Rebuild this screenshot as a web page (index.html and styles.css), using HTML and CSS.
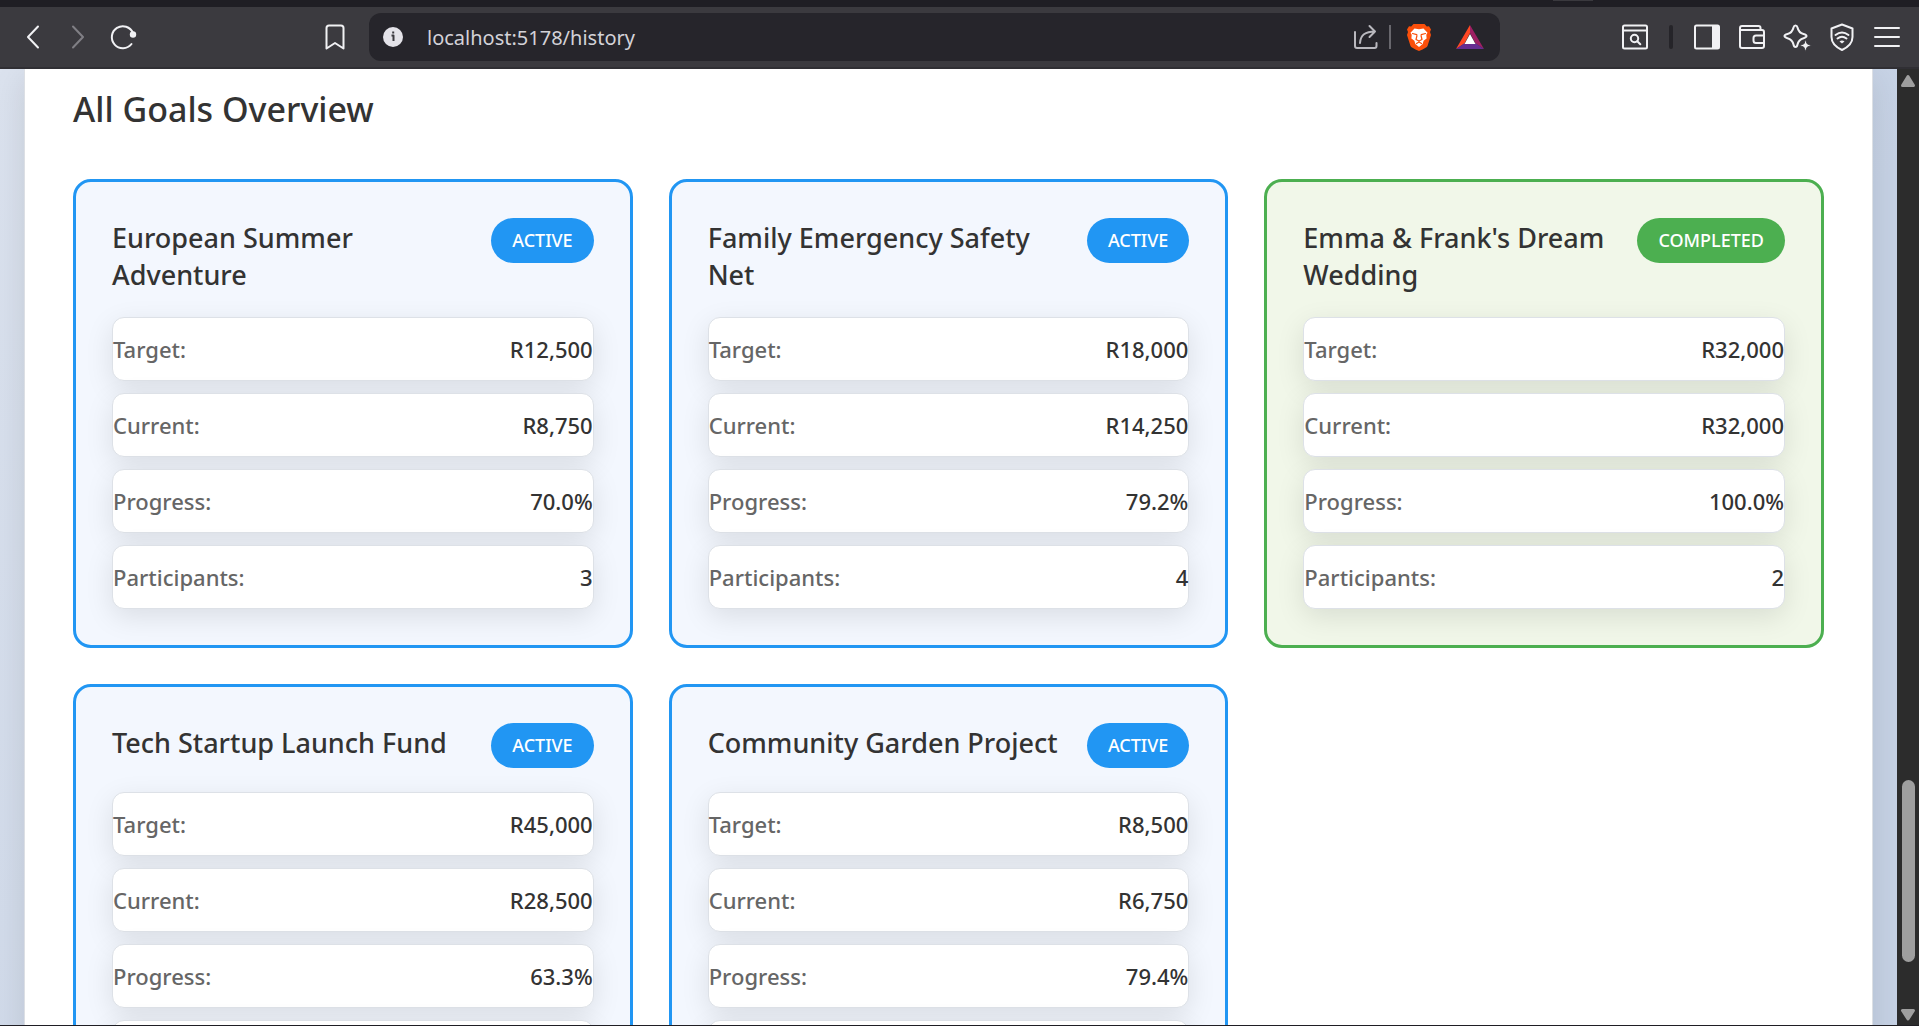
FILE: index.html
```html
<!DOCTYPE html>
<html lang="en">
<head>
<meta charset="utf-8">
<title>Goal History</title>
<link rel="stylesheet" href="styles.css">
</head>
<body>
<div class="tabstrip"><span class="tabstrip-grip"></span></div>
<header class="toolbar">
  <nav class="nav-buttons" aria-label="Navigation">
    <button class="tool" aria-label="Back"><svg viewBox="0 0 28 28"><path d="M19 3.500 9 14l10 10.500"/></svg></button>
    <button class="tool dim" aria-label="Forward"><svg viewBox="0 0 28 28"><path d="M9 3.500 19 14 9 24.500"/></svg></button>
    <button class="tool" aria-label="Reload"><svg viewBox="0 0 28 28"><path d="M22.500 21A11 11 0 1 1 24 10"/><circle cx="24" cy="11.500" r="3.200" class="solid"/></svg></button>
  </nav>
  <div class="address">
    <button class="tool" aria-label="Bookmark"><svg viewBox="0 0 28 28"><path d="M5.500 5q0-2.500 2.500-2.500h12q2.500 0 2.500 2.500v20.500L14 20l-8.500 5.500z"/></svg></button>
    <div class="urlbar">
      <button class="chip" aria-label="Site information"><svg viewBox="0 0 28 28"><circle cx="14" cy="14" r="10" class="info-disc"/><path class="info-mark" d="M12.500 12.500H14.500V18M14.200 8.500v2"/></svg></button>
      <input class="url" type="text" value="localhost:5178/history" aria-label="Address">
      <button class="chip" aria-label="Share"><svg viewBox="0 0 28 28" class="soft"><path d="M3 9v14q0 2 2 2h17.500q2 0 2-2v-3M8 20C8.500 12 13 8.500 23 8.500M17.500 3 23 8.500 17.500 14"/></svg></button>
      <span class="url-rule"></span>
      <button class="chip" aria-label="Brave Shields"><svg viewBox="0 0 28 28">
        <path class="lion" d="M8.500 1h11l2.300 2.500 2.200-.3 2 3.300-1 2.500 1 3-3.500 11Q22 24.500 14 28 6 24.500 5.500 23L2 12l1-3-1-2.500 2-3.300 2.200.3z"/>
        <path class="lion-face" d="M9.500 5.500 14 6.300l4.500-.8 4 4.200-1.200 2 .3 3.800-3 2.200-.9 3.300L14 24l-3.700-3-.9-3.300-3-2.200.3-3.800-1.200-2z"/>
        <path class="lion-lines" d="M7.500 10.500l4.300 1.200M20.500 10.500l-4.300 1.200M12 12.500l-1 4 3 1.500 3-1.500-1-4M11.500 20.500l2.500-1.500 2.500 1.500"/></svg></button>
      <button class="chip last" aria-label="Brave Rewards"><svg viewBox="0 0 28 28"><path fill="#ff4724" d="M14 2v8L8.500 20.500 0 26z"/><path fill="#9e1f63" d="M14 2v8l5.500 10.500L28 26z"/><path fill="#662d91" d="M0 26l8-5.500h12l8 5.500z"/><path fill="#fff" d="M14 11l5.500 10h-11z"/></svg></button>
    </div>
  </div>
  <div class="tools">
    <button class="tool" aria-label="Search page"><svg viewBox="0 0 28 28"><path d="M3.500 2.500h21q1.500 0 1.500 1.500v20q0 1.500-1.500 1.500h-21Q2 25.500 2 24V4q0-1.500 1.500-1.500zM2 7.500h24"/><circle cx="13.500" cy="15.500" r="3.700"/><path d="M16.300 18.300l3 3"/></svg></button>
    <span class="tool-rule"></span>
    <button class="tool" aria-label="Sidebar"><svg viewBox="0 0 28 28"><path d="M3.500 2.500h21q1.500 0 1.500 1.500v20q0 1.500-1.500 1.500h-21Q2 25.500 2 24V4q0-1.500 1.500-1.500z"/><path class="solid" d="M19 3h6v22h-6z"/></svg></button>
    <button class="tool" aria-label="Wallet"><svg viewBox="0 0 28 28"><path d="M22.500 7V5q0-2-2-2H4Q2 3 2 5v18q0 2 2 2h20q2 0 2-2V9q0-2-2-2H2.500M26 12.500h-8q-2.500 0-2.500 2.500v2.500q0 2.500 2.500 2.500h8"/></svg></button>
    <button class="tool" aria-label="Assistant"><svg viewBox="0 0 28 28"><path d="M12.500 2.500q1.500 0 2 2 1.200 5.300 6 6.500 3 .8 3 2t-3 2.200q-4.800 1.300-6 6.300-.5 2.500-2 2.500t-2-2.500q-1.200-5-6-6.300-3-.9-3-2.200t3-2q4.800-1.200 6-6.500.5-2 2-2z"/><path class="solid halo" d="M22.500 16.500l1.700 4.300 4.300 1.700-4.300 1.700-1.700 4.300-1.700-4.300-4.300-1.700 4.300-1.700z"/></svg></button>
    <button class="tool" aria-label="VPN"><svg viewBox="0 0 28 28"><path d="M14 1.500l10.500 4V14q0 8-10.500 13Q3.500 22 3.500 14V5.500z"/><path d="M7.500 12q6.500-5 13 0M9.500 15.500q4.500-3.500 9 0"/><path class="solid" d="M11.500 18.500q2.500-1.800 5 0L14 20.500z"/></svg></button>
    <button class="tool" aria-label="Menu"><svg viewBox="0 0 28 28"><path d="M2 5h24M2 14h24M2 23h24"/></svg></button>
  </div>
</header>
<div class="viewport">
  <div class="page">
    <main class="panel">
      <h2 class="heading">All Goals Overview</h2>
      <div class="goals">
        <article class="goal">
          <div class="goal-head"><h3>European Summer Adventure</h3><span class="badge">ACTIVE</span></div>
          <dl class="facts">
            <div><dt>Target:</dt><dd>R12,500</dd></div>
            <div><dt>Current:</dt><dd>R8,750</dd></div>
            <div><dt>Progress:</dt><dd>70.0%</dd></div>
            <div><dt>Participants:</dt><dd>3</dd></div>
          </dl>
        </article>
        <article class="goal">
          <div class="goal-head"><h3>Family Emergency Safety Net</h3><span class="badge">ACTIVE</span></div>
          <dl class="facts">
            <div><dt>Target:</dt><dd>R18,000</dd></div>
            <div><dt>Current:</dt><dd>R14,250</dd></div>
            <div><dt>Progress:</dt><dd>79.2%</dd></div>
            <div><dt>Participants:</dt><dd>4</dd></div>
          </dl>
        </article>
        <article class="goal done">
          <div class="goal-head"><h3>Emma &amp; Frank's Dream Wedding</h3><span class="badge">COMPLETED</span></div>
          <dl class="facts">
            <div><dt>Target:</dt><dd>R32,000</dd></div>
            <div><dt>Current:</dt><dd>R32,000</dd></div>
            <div><dt>Progress:</dt><dd>100.0%</dd></div>
            <div><dt>Participants:</dt><dd>2</dd></div>
          </dl>
        </article>
        <article class="goal">
          <div class="goal-head"><h3>Tech Startup Launch Fund</h3><span class="badge">ACTIVE</span></div>
          <dl class="facts">
            <div><dt>Target:</dt><dd>R45,000</dd></div>
            <div><dt>Current:</dt><dd>R28,500</dd></div>
            <div><dt>Progress:</dt><dd>63.3%</dd></div>
            <div></div>
          </dl>
        </article>
        <article class="goal">
          <div class="goal-head"><h3>Community Garden Project</h3><span class="badge">ACTIVE</span></div>
          <dl class="facts">
            <div><dt>Target:</dt><dd>R8,500</dd></div>
            <div><dt>Current:</dt><dd>R6,750</dd></div>
            <div><dt>Progress:</dt><dd>79.4%</dd></div>
            <div></div>
          </dl>
        </article>
      </div>
    </main>
  </div>
  <div class="scrollbar">
    <svg class="arrow" viewBox="0 0 22 24"><path d="M11 7.500 16.500 16.500h-11z"/></svg>
    <span class="before-thumb"></span>
    <span class="thumb"></span>
    <span class="after-thumb"></span>
    <svg class="arrow" viewBox="0 0 22 24"><path d="M11 18 5.500 9.500h11z"/></svg>
  </div>
</div>
</body>
</html>
```
FILE: styles.css
```css
* { box-sizing: border-box; margin: 0; padding: 0; }

body {
  height: 100vh;
  display: flex;
  flex-direction: column;
  overflow: hidden;
  font-family: "Noto Sans", "Open Sans", sans-serif;
  color: #333;
  background: #1f1e24;
}

/* Browser chrome */
.tabstrip {
  flex: none;
  height: 7px;
  display: flex;
  justify-content: flex-end;
  padding-right: 326px;
  background: #1f1e24;
}
.tabstrip-grip { width: 40px; height: 1px; background: #3a393e; }

.toolbar {
  flex: none;
  height: 62px;
  display: grid;
  grid-template-columns: 302px minmax(0, 1fr) 409px;
  align-items: center;
  padding: 0 10px;
  background: #3b3a3f;
  border-bottom: 2px solid #302f34;
}
.nav-buttons, .address, .tools, .urlbar { display: flex; align-items: center; }
.tools { justify-content: flex-end; }

button { border: 0; background: none; color: #f1f1f4; }
button svg {
  width: 28px;
  height: 28px;
  display: block;
  overflow: visible;
  fill: none;
  stroke: currentColor;
  stroke-width: 2;
  stroke-linecap: round;
  stroke-linejoin: round;
}
.tool { width: 45px; height: 44px; display: grid; place-items: center; }
.dim { color: #807f85; }
svg .solid { fill: currentColor; stroke: none; }
svg .halo { stroke: #3b3a3f; stroke-width: 1; }
.tool-rule { width: 4px; height: 24px; margin: 0 11px 0 12px; border-radius: 2px; background: #252429; }

.urlbar {
  flex: 1;
  height: 48px;
  margin-left: 12px;
  padding: 0 14px 0 8px;
  border-radius: 12px;
  background: #26252b;
}
.chip { width: 32px; height: 32px; display: grid; place-items: center; }
.chip.last { margin-left: 19px; }
.chip.last path { stroke: none; }
.url {
  flex: 1;
  min-width: 0;
  height: 40px;
  padding-left: 18px;
  border: 0;
  outline: 0;
  background: none;
  color: #d3d2d8;
  font: 400 20px "Noto Sans", "Open Sans", sans-serif;
}
.url-rule { width: 2px; height: 24px; margin: 0 12px 0 7px; background: #68676d; }
.soft { color: #b9b8be; }
.info-disc { fill: #e4e3e9; stroke: none; }
.info-mark { stroke: #3b3a3f; stroke-linecap: butt; }
.lion { fill: #fb4f0a; stroke: none; }
.lion-face { fill: #fff; stroke: none; }
.lion-lines { stroke: #fb4f0a; stroke-width: 1.2; }

/* Page */
.viewport { flex: 1; min-height: 0; display: flex; border-bottom: 1px solid #1f1e24; }
.page {
  flex: 1;
  min-width: 0;
  overflow: hidden;
  padding: 0 24px;
  background: linear-gradient(135deg, #dbe2ee 0%, #c6d2e5 70%);
}
.panel {
  min-height: 100%;
  padding: 16px 48px 48px;
  border: solid #dcdfe4;
  border-width: 0 1px;
  background: #fff;
  box-shadow: 0 8px 32px rgba(0, 0, 0, 0.1);
}
.heading { margin-bottom: 46px; font-size: 34px; line-height: 48px; font-weight: 500; }

.goals {
  display: grid;
  grid-template-columns: repeat(3, minmax(0, 1fr));
  gap: 36px;
  align-items: start;
}
.goal {
  padding: 36px;
  border: 3px solid #2196f3;
  border-radius: 18px;
  background: #f3f7fe;
}
.goal.done { border-color: #4caf50; background: #f1f7e9; }
.goal-head {
  display: flex;
  justify-content: space-between;
  align-items: flex-start;
  gap: 16px;
  margin-bottom: 24px;
}
.goal-head h3 { padding-top: 1px; font-size: 27px; line-height: 37px; font-weight: 500; }
.badge {
  flex: none;
  padding: 0 21px;
  border-radius: 23px;
  background: #2196f3;
  color: #fff;
  font-size: 18px;
  line-height: 45px;
  font-weight: 500;
}
.done .badge { background: #4caf50; }

.facts { display: grid; gap: 12px; }
.facts div {
  height: 64px;
  display: flex;
  justify-content: space-between;
  align-items: center;
  border: 1px solid #dde1e7;
  border-radius: 12px;
  background: #fff;
  box-shadow: 0 8px 28px rgba(0, 0, 0, 0.1);
  font-size: 22px;
  line-height: 32px;
  font-weight: 500;
}
.facts dt { color: #666; }

/* Scrollbar */
.scrollbar {
  flex: none;
  width: 22px;
  display: flex;
  flex-direction: column;
  align-items: center;
  background: #2c2c2c;
}
.arrow { flex: none; width: 22px; height: 24px; fill: #9f9f9f; stroke: #9f9f9f; stroke-width: 3; stroke-linejoin: round; }
.before-thumb { flex: 687; }
.thumb { flex: 182; width: 13px; border-radius: 7px; background: #9f9f9f; }
.after-thumb { flex: 39; }
```
